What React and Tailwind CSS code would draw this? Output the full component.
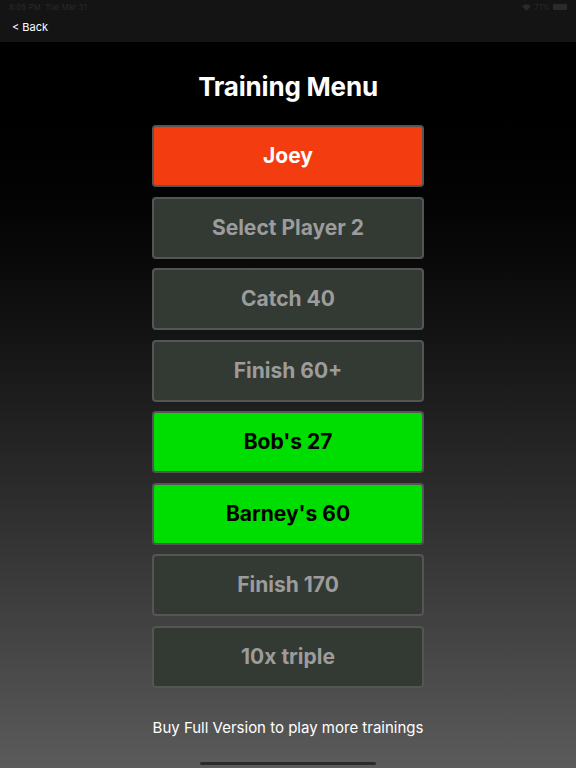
import React from "react";

const items = [
  { label: "Joey", kind: "red" },
  { label: "Select Player 2", kind: "off" },
  { label: "Catch 40", kind: "off" },
  { label: "Finish 60+", kind: "off" },
  { label: "Bob's 27", kind: "green" },
  { label: "Barney's 60", kind: "green" },
  { label: "Finish 170", kind: "off" },
  { label: "10x triple", kind: "off" },
];

const styles = {
  red: "bg-[#f43c11] text-white",
  off: "bg-[#333a33] text-[#9c9c9c]",
  green: "bg-[#00dd00] text-black",
};

export default function App() {
  return (
    <div className="w-[576px] h-[768px] flex flex-col overflow-hidden font-['Inter','Liberation_Sans',sans-serif]">
      <div className="h-[42px] bg-[#141414] flex flex-col">
        <div className="h-[14px] flex items-center justify-between px-[9px] text-[8px] text-[#2a2a2a]">
          <span>8:05 PM&nbsp;&nbsp;Tue Mar 31</span>
          <span className="flex items-center gap-[3px]">
            <svg width="9" height="7" viewBox="0 0 10 8" fill="#2a2a2a">
              <path d="M5 8 L0 2.5 A7 7 0 0 1 10 2.5 Z" />
            </svg>
            71%
            <span className="w-[14px] h-[6px] rounded-[1px] bg-[#2a2a2a]" />
          </span>
        </div>
        <div className="flex-1 flex items-center px-[12px] pb-[1px] text-[11px] text-white">
          &lt; Back
        </div>
      </div>
      <div className="flex-1 flex flex-col items-center bg-gradient-to-b from-[#000000] to-[#5b5b5b] relative">
        <h1 className="mt-[26px] h-[36px] flex items-center text-[26px] font-bold text-white tracking-[-0.2px]">
          Training Menu
        </h1>
        <div className="mt-[21px] flex flex-col gap-[9.5px]">
          {items.map((it) => (
            <div
              key={it.label}
              className={`w-[272px] h-[62px] rounded-[4px] border-2 border-[#555555] flex items-center justify-center text-[21px] font-bold ${styles[it.kind]}`}
            >
              {it.label}
            </div>
          ))}
        </div>
        <div className="mt-[29px] text-[15px] text-white">Buy Full Version to play more trainings</div>
        <div className="absolute bottom-[3px] left-[200px] w-[176px] h-[3px] rounded-full bg-[#2a2a2a]" />
      </div>
    </div>
  );
}
